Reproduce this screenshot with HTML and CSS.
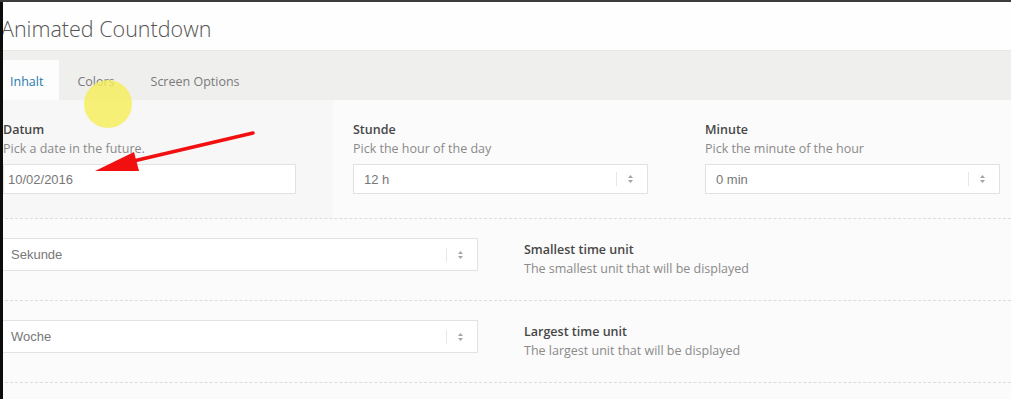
FILE: index.html
```html
<!DOCTYPE html>
<html lang="de">
<head>
  <meta charset="UTF-8" />
  <meta name="viewport" content="width=device-width, initial-scale=1.0"/>
  <title>Animated Countdown</title>
  <link rel="stylesheet" href="styles.css">
</head>
<body>
  <div class="screen">
    <header class="title-bar">
      <h1>Animated Countdown</h1>
    </header>

    <nav class="tabs">
      <span class="tab active">Inhalt</span>
      <span class="tab">Colors</span>
      <span class="tab">Screen Options</span>
    </nav>

    <main class="panel">
      <div class="row row-fields">
        <div class="field field-hover">
          <div class="label">Datum</div>
          <div class="desc">Pick a date in the future.</div>
          <div class="input input-date">10/02/2016</div>
        </div>
        <div class="field">
          <div class="label">Stunde</div>
          <div class="desc">Pick the hour of the day</div>
          <div class="input select">
            <span class="value">12 h</span>
            <span class="divider"></span>
            <svg class="updown" width="7" height="10" viewBox="0 0 7 10"><path d="M3.5 1 L6 4 H1 Z M3.5 9 L6 6 H1 Z" fill="#a5a5a5"/></svg>
          </div>
        </div>
        <div class="field">
          <div class="label">Minute</div>
          <div class="desc">Pick the minute of the hour</div>
          <div class="input select">
            <span class="value">0 min</span>
            <span class="divider"></span>
            <svg class="updown" width="7" height="10" viewBox="0 0 7 10"><path d="M3.5 1 L6 4 H1 Z M3.5 9 L6 6 H1 Z" fill="#a5a5a5"/></svg>
          </div>
        </div>
      </div>

      <div class="row row-side">
        <div class="input select select-wide">
          <span class="value">Sekunde</span>
          <span class="divider"></span>
          <svg class="updown" width="7" height="10" viewBox="0 0 7 10"><path d="M3.5 1 L6 4 H1 Z M3.5 9 L6 6 H1 Z" fill="#a5a5a5"/></svg>
        </div>
        <div class="side-text">
          <div class="label">Smallest time unit</div>
          <div class="desc">The smallest unit that will be displayed</div>
        </div>
      </div>

      <div class="row row-side">
        <div class="input select select-wide">
          <span class="value">Woche</span>
          <span class="divider"></span>
          <svg class="updown" width="7" height="10" viewBox="0 0 7 10"><path d="M3.5 1 L6 4 H1 Z M3.5 9 L6 6 H1 Z" fill="#a5a5a5"/></svg>
        </div>
        <div class="side-text">
          <div class="label">Largest time unit</div>
          <div class="desc">The largest unit that will be displayed</div>
        </div>
      </div>
    </main>

    <!-- screencast overlays -->
    <div class="cursor-spot"></div>
    <svg class="arrow" width="1011" height="399" viewBox="0 0 1011 399">
      <line x1="253" y1="133" x2="125" y2="163" stroke="#f20f0f" stroke-width="3.5" stroke-linecap="round"/>
      <path d="M95 171 L134 152 L139 171 Z" fill="#f20f0f"/>
    </svg>
    <div class="strip"></div>
  </div>
</body>
</html>
```

FILE: styles.css
```css
body {
  margin: 0;
  padding: 0;
  background-color: #fbfbfb;
  font-family: "Open Sans", "Noto Sans", sans-serif;
  overflow: hidden;
}
.screen {
  position: relative;
  width: 1011px;
  height: 399px;
  border-top: 2px solid #3a3d3c;
  box-sizing: border-box;
  overflow: hidden;
}
.strip {
  position: absolute;
  left: 0;
  top: 0;
  width: 3px;
  height: 100%;
  background: #0c0c0c;
}
.title-bar {
  height: 48px;
  background: #fdfefd;
  border-bottom: 1px solid #e6e7e6;
}
h1 {
  margin: 0;
  font-size: 21.5px;
  font-weight: 300;
  color: #555;
  line-height: 53px;
  padding-left: 1px;
}
.tabs {
  display: flex;
  align-items: flex-end;
  height: 49px;
  background: #efefee;
  box-sizing: border-box;
}
.tab {
  padding: 2px 18px 0;
  height: 38px;
  line-height: 40px;
  font-size: 12.5px;
  color: #7a7a7a;
}
.tab:first-child {
  margin-left: -8px;
  padding-right: 16px;
}
.tab.active {
  background: #fcfdfc;
  color: #2a79ae;
}
.panel {
  background: #fbfbfb;
}
.row {
  border-bottom: 1px dashed #dcdcdc;
}
.row-fields {
  display: grid;
  grid-template-columns: 333px 332px 1fr;
  column-gap: 20px;
}
.field {
  padding: 21px 0 24px;
}
.field-hover {
  padding-left: 3px;
  background: #f7f7f7;
}
.label {
  font-size: 12.5px;
  font-weight: 600;
  color: #474747;
  line-height: 18px;
}
.desc {
  font-size: 12.5px;
  color: #8a8a8a;
  line-height: 19px;
}
.input {
  display: flex;
  align-items: center;
  margin-top: 6px;
  width: 295px;
  height: 30px;
  box-sizing: border-box;
  padding-left: 10px;
  background: #fff;
  border: 1px solid #e2e2e2;
  font-family: "Liberation Sans", Arial, sans-serif;
  font-size: 13px;
  color: #777;
}
.input-date {
  width: 293px;
  padding-left: 4px;
}
.select .value {
  flex: 1;
}
.divider {
  width: 1px;
  height: 14px;
  background: #e6e6e6;
}
.updown {
  margin: 0 13px 0 10px;
}
.row-side {
  display: grid;
  grid-template-columns: 478px 1fr;
  column-gap: 46px;
  align-items: start;
  padding: 19px 0 22px;
}
.select-wide {
  width: 481px;
  height: 33px;
  margin-top: 0;
  margin-left: -3px;
  padding-left: 13px;
}
.side-text {
  margin-top: 3px;
}
.cursor-spot {
  position: absolute;
  left: 84px;
  top: 78px;
  width: 48px;
  height: 48px;
  border-radius: 50%;
  background: rgba(245, 238, 90, 0.82);
}
.arrow {
  position: absolute;
  left: 0;
  top: -2px;
  pointer-events: none;
}
```
